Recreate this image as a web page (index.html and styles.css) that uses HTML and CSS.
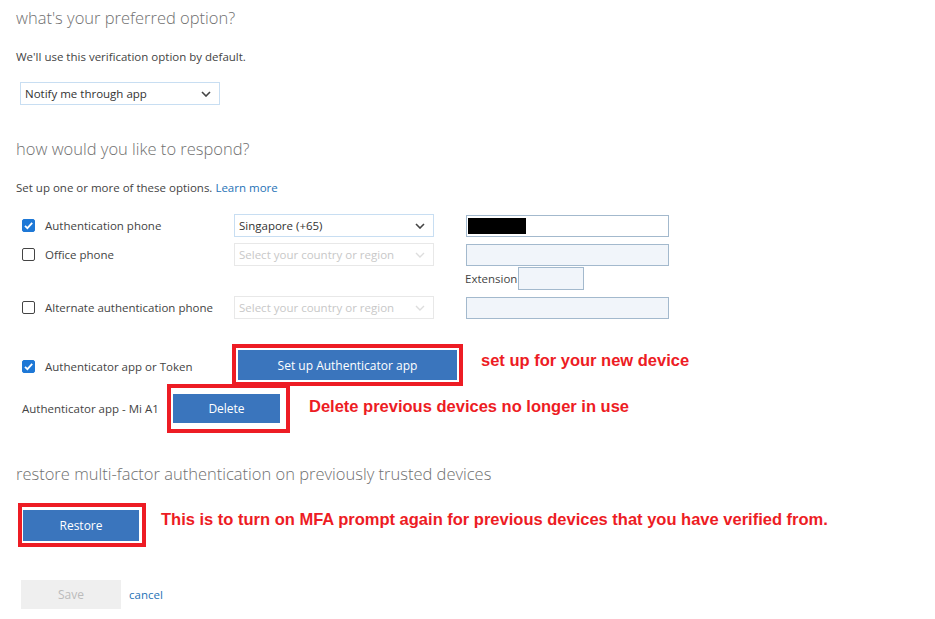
FILE: index.html
```html
<!DOCTYPE html>
<html>
<head>
    <title>Additional security verification</title>
    <link rel="stylesheet" href="styles.css">
</head>
<body>
    <div class="page">
        <h2 class="title first">what's your preferred option?</h2>
        <p class="hint">We'll use this verification option by default.</p>
        <div class="select pref">
            <span>Notify me through app</span>
            <svg class="chev" width="10" height="6" viewBox="0 0 10 6"><path d="M1 1l4 4 4-4" fill="none" stroke="#444" stroke-width="1.6"/></svg>
        </div>

        <h2 class="title second">how would you like to respond?</h2>
        <p class="hint hint2">Set up one or more of these options. <a href="#">Learn more</a></p>

        <div class="phones">
            <div class="row">
                <label class="opt"><span class="box checked"><svg width="13" height="13" viewBox="0 0 13 13"><path d="M3 6.8l2.4 2.4L10.2 3.8" fill="none" stroke="#fff" stroke-width="1.8"/></svg></span>Authentication phone</label>
                <div class="select">
                    <span>Singapore (+65)</span>
                    <svg class="chev" width="10" height="6" viewBox="0 0 10 6"><path d="M1 1l4 4 4-4" fill="none" stroke="#444" stroke-width="1.6"/></svg>
                </div>
                <div class="input"><span class="redact"></span></div>
            </div>
            <div class="row">
                <label class="opt"><span class="box"></span>Office phone</label>
                <div class="select off">
                    <span>Select your country or region</span>
                    <svg class="chev" width="10" height="6" viewBox="0 0 10 6"><path d="M1 1l4 4 4-4" fill="none" stroke="#ddd" stroke-width="1.4"/></svg>
                </div>
                <div class="input off"></div>
            </div>
            <div class="ext">
                <span>Extension</span>
                <div class="input off small"></div>
            </div>
            <div class="row">
                <label class="opt"><span class="box"></span>Alternate authentication phone</label>
                <div class="select off">
                    <span>Select your country or region</span>
                    <svg class="chev" width="10" height="6" viewBox="0 0 10 6"><path d="M1 1l4 4 4-4" fill="none" stroke="#ddd" stroke-width="1.4"/></svg>
                </div>
                <div class="input off"></div>
            </div>
        </div>

        <div class="app-row">
            <label class="opt"><span class="box checked"><svg width="13" height="13" viewBox="0 0 13 13"><path d="M3 6.8l2.4 2.4L10.2 3.8" fill="none" stroke="#fff" stroke-width="1.8"/></svg></span>Authenticator app or Token</label>
            <div class="mark mark-setup"><button class="btn btn-setup">Set up Authenticator app</button></div>
            <span class="note note-setup">set up for your new device</span>
        </div>
        <div class="device-row">
            <span class="device">Authenticator app - Mi A1</span>
            <div class="mark mark-delete"><button class="btn btn-delete">Delete</button></div>
            <span class="note note-delete">Delete previous devices no longer in use</span>
        </div>

        <h2 class="title third">restore multi-factor authentication on previously trusted devices</h2>
        <div class="restore-row">
            <div class="mark mark-restore"><button class="btn btn-restore">Restore</button></div>
            <span class="note note-restore">This is to turn on MFA prompt again for previous devices that you have verified from.</span>
        </div>

        <div class="actions">
            <button class="save">Save</button>
            <a href="#">cancel</a>
        </div>
    </div>
</body>
</html>
```

FILE: styles.css
```css
body {
    margin: 0;
    background: #fff;
    color: #444;
    font-family: "Open Sans", "Segoe UI", sans-serif;
    font-size: 11.5px;
}
a {
    color: #2672b6;
    text-decoration: none;
}
.page {
    padding-left: 16px;
}
.title {
    font-weight: 300;
    font-size: 16.5px;
    color: #707070;
    line-height: 24px;
    margin: 0;
}
.first {
    padding-top: 6px;
}
.second {
    margin-top: 32px;
}
.third {
    margin-top: 29px;
}
.hint {
    margin: 19px 0 0;
    line-height: 16px;
}
.hint2 {
    margin-top: 19px;
}
.select {
    box-sizing: border-box;
    width: 200px;
    height: 23px;
    border: 1px solid #c8def2;
    display: flex;
    align-items: center;
    justify-content: space-between;
    padding: 0 8px 0 4px;
    color: #333;
}
.select.pref {
    margin: 17px 0 0 4px;
}
.select.off {
    border-color: #e8e8e8;
    color: #c8c8c8;
}
.phones {
    margin-top: 18px;
}
.row {
    display: flex;
    align-items: center;
    margin-bottom: 6px;
}
.opt {
    display: flex;
    align-items: center;
    gap: 10px;
    width: 212px;
    padding-left: 6px;
    color: #444;
}
.box {
    box-sizing: border-box;
    width: 13px;
    height: 13px;
    border: 1px solid #444;
    border-radius: 2px;
    flex: none;
    display: flex;
}
.box.checked {
    background: #1e78d6;
    border-color: #1e78d6;
}
.box.checked svg {
    margin: -1px;
}
.input {
    box-sizing: border-box;
    width: 203px;
    height: 22px;
    border: 1px solid #a3b9cd;
    margin-left: 32px;
    padding: 2px 1px;
    background: #fff;
}
.input.off {
    background: #f1f5fa;
}
.redact {
    display: block;
    width: 58px;
    height: 16px;
    background: #000;
}
.ext {
    display: flex;
    align-items: center;
    margin: -6px 0 6px 449px;
    height: 24px;
}
.ext .input {
    margin-left: 1px;
}
.input.small {
    width: 66px;
    height: 23px;
}
.app-row {
    display: flex;
    align-items: center;
    margin-top: 25px;
}
.app-row .opt {
    width: 210px;
    padding-top: 3px;
}
.mark {
    border: 4px solid #ed1c24;
    background: #fff;
}
.mark-setup {
    padding: 2px;
}
.mark-delete {
    padding: 6px 6px 6px 2px;
}
.mark-restore {
    padding: 3px 3px 2px 1px;
}
.btn {
    display: block;
    border: 0;
    background: #3a75bd;
    color: #fff;
    font-family: "Open Sans", "Segoe UI", sans-serif;
    font-size: 12px;
    padding: 0;
}
.btn-setup {
    width: 219px;
    height: 30px;
}
.btn-delete {
    width: 107px;
    height: 29px;
}
.btn-restore {
    width: 116px;
    height: 31px;
}
.note {
    color: #ed1c24;
    font-family: "Liberation Sans", Arial, sans-serif;
    font-weight: bold;
    font-size: 16.5px;
}
.note-setup {
    margin: -9px 0 0 18px;
}
.note-delete {
    margin: -5px 0 0 19px;
}
.note-restore {
    margin: -12px 0 0 15px;
}
.device-row {
    display: flex;
    align-items: center;
    margin-top: -2px;
    padding-left: 6px;
}
.device {
    width: 145px;
}
.restore-row {
    display: flex;
    align-items: center;
    margin: 17px 0 0 2px;
}
.actions {
    display: flex;
    align-items: center;
    gap: 8px;
    margin: 33px 0 0 5px;
}
.save {
    width: 100px;
    height: 29px;
    border: 0;
    background: #efefef;
    color: #bbb;
    font-family: "Open Sans", "Segoe UI", sans-serif;
    font-size: 12px;
}
```
